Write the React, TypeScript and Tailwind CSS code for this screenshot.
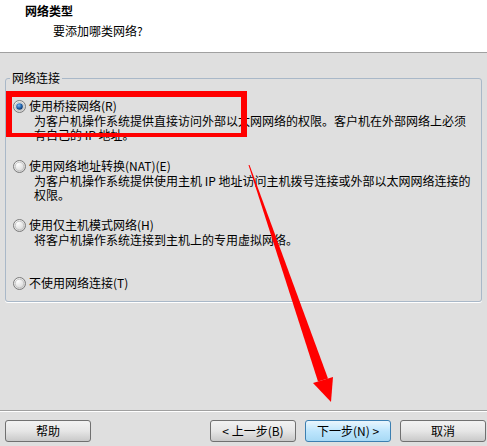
import React from 'react';

const FONT = "font-['SimSun','Noto_Sans_CJK_SC',sans-serif]";

function Radio({ checked }: { checked?: boolean }) {
  return (
    <svg width="13" height="13" viewBox="0 0 13 13" className="shrink-0">
      <defs>
        <radialGradient id={checked ? 'rg-on' : 'rg-off'} cx="0.35" cy="0.3" r="0.8">
          <stop offset="0" stopColor="#ffffff" />
          <stop offset="1" stopColor="#cfcfcf" />
        </radialGradient>
        <radialGradient id="dot" cx="0.4" cy="0.35" r="0.7">
          <stop offset="0" stopColor="#7fb8f0" />
          <stop offset="0.6" stopColor="#1d5fa8" />
          <stop offset="1" stopColor="#0a2c5c" />
        </radialGradient>
      </defs>
      <circle cx="6.5" cy="6.5" r="6" fill={`url(#${checked ? 'rg-on' : 'rg-off'})`} stroke="#7a7a7a" strokeWidth="1" />
      <circle cx="6.5" cy="6.5" r="4.3" fill="none" stroke="#bdbdbd" strokeWidth="0.8" />
      {checked && <circle cx="6.5" cy="6.5" r="3.3" fill="url(#dot)" />}
    </svg>
  );
}

function Option({
  label,
  lines,
  checked,
  className = '',
}: {
  label: string;
  lines: string[];
  checked?: boolean;
  className?: string;
}) {
  return (
    <div className={className}>
      <div className="flex items-center h-[14px] pl-[7px] gap-[3px]">
        <Radio checked={checked} />
        <span className="leading-[14px]">{label}</span>
      </div>
      {lines.length > 0 && (
        <div className="ml-[28px] mt-[1px] leading-[14px] whitespace-nowrap">
          {lines.map(l => (
            <div key={l}>{l}</div>
          ))}
        </div>
      )}
    </div>
  );
}

function Button({ children, primary }: { children: React.ReactNode; primary?: boolean }) {
  return (
    <button
      className={
        primary
          ? 'w-[86px] h-[22px] rounded-[3px] border border-[#3c7fb1] bg-gradient-to-b from-[#eaf6fd] via-[#bee6fd] to-[#a7d9f5] text-[12px] text-black'
          : 'w-[86px] h-[22px] rounded-[3px] border border-[#707070] bg-gradient-to-b from-[#f2f2f2] via-[#e6e6e6] to-[#c9c9c9] text-[12px] text-black'
      }
    >
      {children}
    </button>
  );
}

export default function App() {
  return (
    <div className={`relative w-[487px] h-[446px] flex flex-col overflow-hidden bg-[#dfdfdf] text-[12px] text-black ${FONT}`}>
      {/* Header */}
      <div className="h-[53px] bg-white border-b border-[#a0a0a0] pl-[25px] pt-[4px]">
        <div className="font-bold leading-[14px]">网络类型</div>
        <div className="pl-[28px] mt-[6px] leading-[14px]">要添加哪类网络?</div>
      </div>

      {/* Body */}
      <div className="flex-1 flex flex-col px-[5px]">
        <fieldset className="mt-[19px] h-[230px] border border-[#a9b8c8] rounded-[3px] px-0 pb-0 m-0 shadow-[0_1px_0_#ffffff]">
          <legend className="ml-[4px] px-[2px] leading-[12px]">网络连接</legend>
          <Option
            className="mt-[15px]"
            checked
            label="使用桥接网络(R)"
            lines={['为客户机操作系统提供直接访问外部以太网网络的权限。客户机在外部网络上必须', '有自己的 IP 地址。']}
          />
          <Option
            className="mt-[17px]"
            label="使用网络地址转换(NAT)(E)"
            lines={['为客户机操作系统提供使用主机 IP 地址访问主机拨号连接或外部以太网网络连接的', '权限。']}
          />
          <Option
            className="mt-[16px]"
            label="使用仅主机模式网络(H)"
            lines={['将客户机操作系统连接到主机上的专用虚拟网络。']}
          />
          <Option className="mt-[29px]" label="不使用网络连接(T)" lines={[]} />
        </fieldset>
        <div className="flex-1" />
      </div>

      {/* Footer */}
      <div className="border-t border-[#a0a0a0] shadow-[inset_0_1px_0_#ffffff] flex items-start pt-[9px] pb-[4px] pl-[5px] pr-[1px]">
        <Button>帮助</Button>
        <div className="flex-1" />
        <div className="flex gap-[9px]">
          <Button>&lt; 上一步(B)</Button>
          <Button primary>下一步(N) &gt;</Button>
          <Button>取消</Button>
        </div>
      </div>

      {/* Annotation: red box */}
      <div className="absolute left-[6px] top-[91px] w-[241px] h-[46px] border-[6px] border-b-[4px] border-[#ff0000] pointer-events-none" />

      {/* Annotation: red arrow */}
      <svg className="absolute left-0 top-0 pointer-events-none" width="487" height="446" viewBox="0 0 487 446">
        <polygon points="248.5,165 249.5,165 328,378.5 318,381.5" fill="#ff0000" />
        <polygon points="313,383 333,377 331,402" fill="#ff0000" />
      </svg>
    </div>
  );
}
